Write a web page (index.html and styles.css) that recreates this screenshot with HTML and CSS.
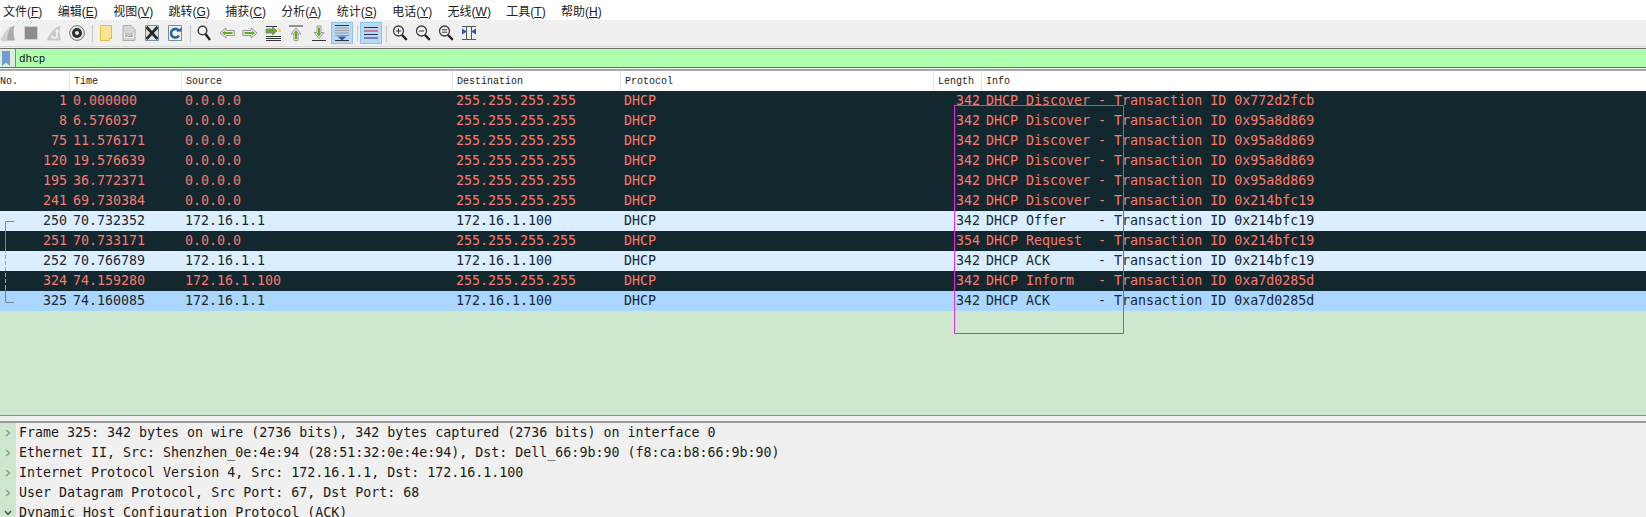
FILE: index.html
```html
<!DOCTYPE html>
<html lang="zh-CN">
<head>
    <meta charset="UTF-8">
    <meta name="viewport" content="width=device-width, initial-scale=1.0">
    <title>Wireshark dhcp</title>
    <link rel="stylesheet" href="styles.css">
</head>
<body>
    <div class="menubar">
        <span>文件(<u>F</u>)</span>
        <span>编辑(<u>E</u>)</span>
        <span>视图(<u>V</u>)</span>
        <span>跳转(<u>G</u>)</span>
        <span>捕获(<u>C</u>)</span>
        <span>分析(<u>A</u>)</span>
        <span>统计(<u>S</u>)</span>
        <span>电话(<u>Y</u>)</span>
        <span>无线(<u>W</u>)</span>
        <span>工具(<u>T</u>)</span>
        <span>帮助(<u>H</u>)</span>
    </div>

    <div class="toolbar">
        <div class="tool"><svg viewBox="0 0 16 16"><path d="M1 15.500C3 9 8 2.500 14.500 .5c-1.500 5-1 10 .5 15z" fill="#ababab"/><path d="M1 15.500C3 9 8 2.500 11 1.500 8.500 6 7 11 7 15.500z" fill="#d2d2d2"/></svg></div>
        <div class="tool"><svg viewBox="0 0 16 16"><rect x="1.500" y="1.500" width="13" height="13" fill="#8d8d8d" stroke="#d0d0d0"/></svg></div>
        <div class="tool"><svg viewBox="0 0 16 16"><path d="M1 15.500C3 9 8 2.500 14.500 .5c-1.500 5-1 10 .5 15z" fill="#c9c9c9"/><path d="M11 5.500v5a2.500 2.500 0 0 1-5 0" fill="none" stroke="#f6f6f6" stroke-width="1.600"/><path d="M9 6.500l2-2.500 2 2.500z" fill="#f6f6f6"/></svg></div>
        <div class="tool"><svg viewBox="0 0 16 16"><circle cx="8" cy="8" r="7.400" fill="#e4e4e4" stroke="#777"/><circle cx="8" cy="8" r="5" fill="#2e2e2e"/><circle cx="8" cy="8" r="2" fill="#e8e8e8"/></svg></div>
        <i class="sep"></i>
        <div class="tool"><svg viewBox="0 0 16 16"><path d="M2.500 .5h11v13h-2v2h-9z" fill="#fde394" stroke="#eab93e"/></svg></div>
        <div class="tool"><svg viewBox="0 0 16 16"><path d="M2 .5h8l4 4v11H2z" fill="#d6d6d6" stroke="#b0b0b0"/><rect x="3" y="8" width="10" height="5" fill="#f4f4f4"/><text x="8" y="12.300" class="bits">010</text></svg></div>
        <div class="tool"><svg viewBox="0 0 16 16"><path d="M1.500 .5h13v15h-13z" fill="#e6e2d6" stroke="#7d8b96"/><path d="M2.500 2l11 12M13.500 2l-11 12" stroke="#1f2a33" stroke-width="2.600"/></svg></div>
        <div class="tool"><svg viewBox="0 0 16 16"><path d="M1.500 .5h13v15h-13z" fill="#f3efe4" stroke="#7d8b96"/><path d="M12 6A4.300 4.300 0 1 0 12 10.500" fill="none" stroke="#2560b0" stroke-width="2.400"/><path d="M9.500 6.500h5v-4z" fill="#2560b0"/></svg></div>
        <i class="sep"></i>
        <div class="tool"><svg viewBox="0 0 16 16"><circle cx="6.500" cy="5.500" r="4.300" fill="#f6f6f6" stroke="#3c3c3c" stroke-width="1.500"/><path d="M9.500 9l4.500 6" stroke="#222" stroke-width="2.400"/></svg></div>
        <div class="tool"><svg viewBox="0 0 16 16"><path d="M.8 8L7 3v2.500h8.200v5H7V13z" fill="#ececec" stroke="#999"/><path d="M3 8l3-2.300v1.300h7.500v2H6v1.300z" fill="#62b01e"/></svg></div>
        <div class="tool"><svg viewBox="0 0 16 16"><path d="M15.200 8L9 3v2.500H.8v5H9V13z" fill="#ececec" stroke="#999"/><path d="M13 8l-3-2.300v1.300H2.500v2H10v1.300z" fill="#62b01e"/></svg></div>
        <div class="tool"><svg viewBox="0 0 16 16"><path d="M1 1.500h11M1 11.500h15M1 13.500h15M1 15.500h15" stroke="#333"/><path d="M12 6L7.500 2v2H1v4h6.500v2z" fill="#62b01e" stroke="#888"/><rect x="13" y="4" width="3" height="3" fill="#f5df5a"/></svg></div>
        <div class="tool"><svg viewBox="0 0 16 16"><path d="M1 1h14" stroke="#333"/><path d="M8 3l5 6h-3v6.500H6V9H3z" fill="#ececec" stroke="#999"/><path d="M8 5l2.500 3.500H9v5.500H7V8.500H5.500z" fill="#62b01e"/></svg></div>
        <div class="tool"><svg viewBox="0 0 16 16"><path d="M1 15.500h14" stroke="#333"/><path d="M8 13.500l5-6h-3V1H6v6.500H3z" fill="#ececec" stroke="#999"/><path d="M8 11.500l2.500-3.500H9V2.500H7V8H5.500z" fill="#62b01e"/></svg></div>
        <div class="tool on"><svg viewBox="0 0 16 16"><path d="M1 .5h14" stroke="#333"/><path d="M1 3h14M1 5.500h14M1 8h14M1 10.500h14" stroke="#9a9a9a"/><path d="M1 15.500h14" stroke="#333"/><path d="M3.500 11.500h9l-4.500 4z" fill="#2a5ca8"/></svg></div>
        <i class="sep"></i>
        <div class="tool on"><svg viewBox="0 0 16 16"><path d="M1 2.500h14M1 9.500h14M1 13h14" stroke="#27305e" stroke-width="1.100"/><path d="M1 6h14" stroke="#d8303c" stroke-width="1.100"/></svg></div>
        <i class="sep"></i>
        <div class="tool"><svg viewBox="0 0 16 16"><circle cx="6.500" cy="6" r="5" fill="#f6f6f6" stroke="#3c3c3c" stroke-width="1.300"/><path d="M10 10l4.800 4.800" stroke="#222" stroke-width="2.400"/><path d="M3.800 6h5.400M6.500 3.300v5.400" stroke="#333"/></svg></div>
        <div class="tool"><svg viewBox="0 0 16 16"><circle cx="6.500" cy="6" r="5" fill="#f6f6f6" stroke="#3c3c3c" stroke-width="1.300"/><path d="M10 10l4.800 4.800" stroke="#222" stroke-width="2.400"/><path d="M3.800 6h5.400" stroke="#333"/></svg></div>
        <div class="tool"><svg viewBox="0 0 16 16"><circle cx="6.500" cy="6" r="5" fill="#f6f6f6" stroke="#3c3c3c" stroke-width="1.300"/><path d="M10 10l4.800 4.800" stroke="#222" stroke-width="2.400"/><path d="M3.800 4.800h5.400M3.800 7.200h5.400" stroke="#333"/></svg></div>
        <div class="tool"><svg viewBox="0 0 16 16"><path d="M1 1.500h14M1 14.500h14M5.500 1v14M10.500 1v14" stroke="#555"/><path d="M1 3.500l5 3-5 3zM15 3.500l-5 3 5 3z" fill="#2a5ca8"/></svg></div>
    </div>

    <div class="filterbar">
        <div class="bookmark"><svg viewBox="0 0 8 15"><path d="M0 0h8v15L4 11.500 0 15z" fill="#6e9bd0"/></svg></div>
        <div class="filter-text">dhcp</div>
    </div>

    <div class="heads">
        <div class="c-no">No.</div>
        <div class="c-time">Time</div>
        <div class="c-src">Source</div>
        <div class="c-dst">Destination</div>
        <div class="c-proto">Protocol</div>
        <div class="c-len">Length</div>
        <div class="c-info">Info</div>
    </div>

    <div class="list">
        <div class="row dark"><div class="c-no">1</div><div class="c-time">0.000000</div><div class="c-src">0.0.0.0</div><div class="c-dst">255.255.255.255</div><div class="c-proto">DHCP</div><div class="c-len">342</div><div class="c-info">DHCP Discover - Transaction ID 0x772d2fcb</div></div>
        <div class="row dark"><div class="c-no">8</div><div class="c-time">6.576037</div><div class="c-src">0.0.0.0</div><div class="c-dst">255.255.255.255</div><div class="c-proto">DHCP</div><div class="c-len">342</div><div class="c-info">DHCP Discover - Transaction ID 0x95a8d869</div></div>
        <div class="row dark"><div class="c-no">75</div><div class="c-time">11.576171</div><div class="c-src">0.0.0.0</div><div class="c-dst">255.255.255.255</div><div class="c-proto">DHCP</div><div class="c-len">342</div><div class="c-info">DHCP Discover - Transaction ID 0x95a8d869</div></div>
        <div class="row dark"><div class="c-no">120</div><div class="c-time">19.576639</div><div class="c-src">0.0.0.0</div><div class="c-dst">255.255.255.255</div><div class="c-proto">DHCP</div><div class="c-len">342</div><div class="c-info">DHCP Discover - Transaction ID 0x95a8d869</div></div>
        <div class="row dark"><div class="c-no">195</div><div class="c-time">36.772371</div><div class="c-src">0.0.0.0</div><div class="c-dst">255.255.255.255</div><div class="c-proto">DHCP</div><div class="c-len">342</div><div class="c-info">DHCP Discover - Transaction ID 0x95a8d869</div></div>
        <div class="row dark"><div class="c-no">241</div><div class="c-time">69.730384</div><div class="c-src">0.0.0.0</div><div class="c-dst">255.255.255.255</div><div class="c-proto">DHCP</div><div class="c-len">342</div><div class="c-info">DHCP Discover - Transaction ID 0x214bfc19</div></div>
        <div class="row light"><div class="c-no">250</div><div class="c-time">70.732352</div><div class="c-src">172.16.1.1</div><div class="c-dst">172.16.1.100</div><div class="c-proto">DHCP</div><div class="c-len">342</div><div class="c-info">DHCP Offer    - Transaction ID 0x214bfc19</div></div>
        <div class="row dark"><div class="c-no">251</div><div class="c-time">70.733171</div><div class="c-src">0.0.0.0</div><div class="c-dst">255.255.255.255</div><div class="c-proto">DHCP</div><div class="c-len">354</div><div class="c-info">DHCP Request  - Transaction ID 0x214bfc19</div></div>
        <div class="row light"><div class="c-no">252</div><div class="c-time">70.766789</div><div class="c-src">172.16.1.1</div><div class="c-dst">172.16.1.100</div><div class="c-proto">DHCP</div><div class="c-len">342</div><div class="c-info">DHCP ACK      - Transaction ID 0x214bfc19</div></div>
        <div class="row dark"><div class="c-no">324</div><div class="c-time">74.159280</div><div class="c-src">172.16.1.100</div><div class="c-dst">255.255.255.255</div><div class="c-proto">DHCP</div><div class="c-len">342</div><div class="c-info">DHCP Inform   - Transaction ID 0xa7d0285d</div></div>
        <div class="row picked"><div class="c-no">325</div><div class="c-time">74.160085</div><div class="c-src">172.16.1.1</div><div class="c-dst">172.16.1.100</div><div class="c-proto">DHCP</div><div class="c-len">342</div><div class="c-info">DHCP ACK      - Transaction ID 0xa7d0285d</div></div>
        <!-- 帧之间的关联线 -->
        <svg class="bracket" viewBox="0 0 10 82"><path d="M9 .5H.5v28M.5 68v13.500H9" fill="none" stroke="#76858c"/><path d="M.5 28v40" fill="none" stroke="#9aa6ab" stroke-dasharray="4 2"/></svg>
        <!-- 截图上画的标注框 -->
        <div class="markbox"></div>
    </div>

    <div class="details">
        <div class="tree"><svg viewBox="0 0 8 8"><path d="M2 1l3.500 3L2 7" fill="none" stroke="#8a9a8a" stroke-width="1.300"/></svg><span>Frame 325: 342 bytes on wire (2736 bits), 342 bytes captured (2736 bits) on interface 0</span></div>
        <div class="tree"><svg viewBox="0 0 8 8"><path d="M2 1l3.500 3L2 7" fill="none" stroke="#8a9a8a" stroke-width="1.300"/></svg><span>Ethernet II, Src: Shenzhen_0e:4e:94 (28:51:32:0e:4e:94), Dst: Dell_66:9b:90 (f8:ca:b8:66:9b:90)</span></div>
        <div class="tree"><svg viewBox="0 0 8 8"><path d="M2 1l3.500 3L2 7" fill="none" stroke="#8a9a8a" stroke-width="1.300"/></svg><span>Internet Protocol Version 4, Src: 172.16.1.1, Dst: 172.16.1.100</span></div>
        <div class="tree"><svg viewBox="0 0 8 8"><path d="M2 1l3.500 3L2 7" fill="none" stroke="#8a9a8a" stroke-width="1.300"/></svg><span>User Datagram Protocol, Src Port: 67, Dst Port: 68</span></div>
        <div class="tree"><svg viewBox="0 0 8 8"><path d="M1 2l3 3.500L7 2" fill="none" stroke="#444" stroke-width="1.300"/></svg><span>Dynamic Host Configuration Protocol (ACK)</span></div>
    </div>
</body>
</html>
```

FILE: styles.css
```css
*{
    box-sizing: border-box;
    margin: 0;
    padding: 0;
}
html, body{
    height: 100%;
    overflow: hidden;
}
body{
    background-color: #f0f0f0;
    font-family: "DejaVu Sans Mono", monospace;
    font-size: 13.3px;
    color: #1b2730;
}

.menubar{
    height: 20px;
    background-color: #fff;
    display: flex;
    align-items: center;
    gap: 15.4px;
    padding-left: 3px;
    font-family: "Liberation Sans", "Noto Sans CJK SC", sans-serif;
    font-size: 12px;
    color: #222;
}
.menubar span{
    white-space: nowrap;
}

.toolbar{
    height: 27px;
    background-color: #f0f0f0;
    display: flex;
    align-items: center;
    border-bottom: 1px solid #d8d8d8;
}
.tool{
    width: 16px;
    height: 22px;
    margin-right: 7px;
    display: flex;
    align-items: center;
    justify-content: center;
    flex: none;
}
.tool svg{
    width: 16px;
    height: 16px;
    flex: none;
}
.tool.on{
    width: 22px;
    margin-left: -3px;
    margin-right: 4px;
    background-color: #b8d8f4;
    border: 1px solid #8fc2ec;
}
.bits{
    font-family: "Liberation Mono", monospace;
    font-size: 4.5px;
    text-anchor: middle;
    fill: #555;
}
.sep{
    width: 1px;
    height: 17px;
    margin-right: 5px;
    background-color: #c8c8c8;
    flex: none;
}

.filterbar{
    height: 20px;
    margin-top: 1px;
    border-top: 1px solid #6e6e6e;
    border-bottom: 1px solid #6e6e6e;
    background-color: #afffaf;
    display: flex;
    align-items: center;
}
.bookmark{
    width: 16px;
    height: 100%;
    padding-left: 2px;
    background-color: #dcecdc;
    border-right: 1px solid #6f8f6f;
    display: flex;
    align-items: center;
}
.bookmark svg{
    width: 8px;
    height: 15px;
}
.filter-text{
    padding: 1px 0 0 3px;
    font-family: "Liberation Mono", monospace;
    font-size: 11px;
    color: #111;
}

.heads{
    height: 22px;
    background-color: #fff;
    border-top: 2px solid #a8a8b0;
    margin-top: 1px;
    display: grid;
    grid-template-columns: 70px 112px 271px 168px 313px 48px 1fr;
    font-family: "Liberation Mono", monospace;
    font-size: 10px;
    align-items: center;
    color: #222;
}
.heads > div{
    height: 100%;
    display: flex;
    align-items: center;
    border-right: 1px solid #e4e4e4;
    padding-left: 4px;
}
.heads .c-no{
    padding-left: 0;
}
.heads .c-info{
    border-right: none;
}

.list{
    position: relative;
    height: 325px;
    background-color: #cde8cf;
    border-bottom: 1px solid #8a8a8a;
}
.row{
    height: 20px;
    padding-bottom: 2px;
    display: grid;
    grid-template-columns: 70px 112px 271px 168px 313px 48px 1fr;
    align-items: center;
    white-space: pre;
}
.row > div{
    padding-left: 3px;
}
.row .c-no, .row .c-len{
    text-align: right;
    padding-left: 0;
    padding-right: 3px;
}
.row .c-len{
    padding-right: 2px;
}
.row .c-info{
    padding-left: 4px;
}
.dark{
    background-color: #12272e;
    color: #fb7a6e;
}
.light{
    background-color: #daeeff;
}
.picked{
    background-color: #abd6ff;
}

.bracket{
    position: absolute;
    left: 5px;
    top: 130px;
    width: 10px;
    height: 82px;
}
.markbox{
    position: absolute;
    left: 954px;
    top: 14px;
    width: 170px;
    height: 229px;
    border: 1px solid #e22ddc;
}

.details{
    border-top: 2px solid #9a9a9a;
    margin-top: 5px;
    background-color: #f0f0f0;
}
.tree{
    height: 20px;
    display: flex;
    align-items: center;
    white-space: pre;
    color: #1a1a1a;
}
.tree svg{
    width: 16px;
    height: 20px;
    padding: 6px 4px;
    background-color: #cde8cf;
    flex: none;
}
.tree span{
    padding: 0 0 2px 3px;
}
```
